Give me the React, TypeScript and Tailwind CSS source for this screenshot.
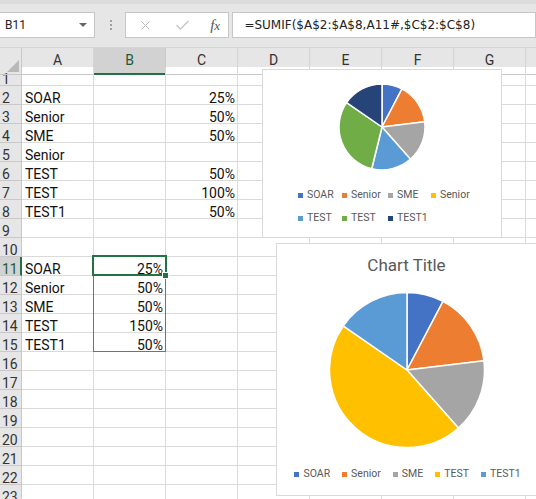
import { Check, X } from 'lucide-react'

const COLS = ['A', 'B', 'C', 'D', 'E', 'F', 'G', 'H']

type Row = { a?: string; b?: string; c?: string }

const rows: Record<number, Row> = {
    2: { a: 'SOAR', c: '25%' },
    3: { a: 'Senior', c: '50%' },
    4: { a: 'SME', c: '50%' },
    5: { a: 'Senior' },
    6: { a: 'TEST', c: '50%' },
    7: { a: 'TEST', c: '100%' },
    8: { a: 'TEST1', c: '50%' },
    11: { a: 'SOAR', b: '25%' },
    12: { a: 'Senior', b: '50%' },
    13: { a: 'SME', b: '50%' },
    14: { a: 'TEST', b: '150%' },
    15: { a: 'TEST1', b: '50%' },
}

const chart1 = [
    { label: 'SOAR', value: 25, fill: '#4472c4', sq: 'bg-[#4472c4]' },
    { label: 'Senior', value: 50, fill: '#ed7d31', sq: 'bg-[#ed7d31]' },
    { label: 'SME', value: 50, fill: '#a5a5a5', sq: 'bg-[#a5a5a5]' },
    { label: 'Senior', value: 0, fill: '#ffc000', sq: 'bg-[#ffc000]' },
    { label: 'TEST', value: 50, fill: '#5b9bd5', sq: 'bg-[#5b9bd5]' },
    { label: 'TEST', value: 100, fill: '#70ad47', sq: 'bg-[#70ad47]' },
    { label: 'TEST1', value: 50, fill: '#264478', sq: 'bg-[#264478]' },
]

const chart2 = [
    { label: 'SOAR', value: 25, fill: '#4472c4', sq: 'bg-[#4472c4]' },
    { label: 'Senior', value: 50, fill: '#ed7d31', sq: 'bg-[#ed7d31]' },
    { label: 'SME', value: 50, fill: '#a5a5a5', sq: 'bg-[#a5a5a5]' },
    { label: 'TEST', value: 150, fill: '#ffc000', sq: 'bg-[#ffc000]' },
    { label: 'TEST1', value: 50, fill: '#5b9bd5', sq: 'bg-[#5b9bd5]' },
]

function Pie({ slices, r, size }: { slices: { value: number; fill: string }[]; r: number; size: number }) {
    const total = slices.reduce((s, x) => s + x.value, 0)
    const c = size / 2
    let acc = 0
    return (
        <svg width={size} height={size} viewBox={`0 0 ${size} ${size}`}>
            {slices.map((s, i) => {
                if (!s.value) return null
                const a0 = (acc / total) * Math.PI * 2
                acc += s.value
                const a1 = (acc / total) * Math.PI * 2
                const x0 = c + r * Math.sin(a0)
                const y0 = c - r * Math.cos(a0)
                const x1 = c + r * Math.sin(a1)
                const y1 = c - r * Math.cos(a1)
                const large = a1 - a0 > Math.PI ? 1 : 0
                return (
                    <path
                        key={i}
                        d={`M${c} ${c} L${x0} ${y0} A${r} ${r} 0 ${large} 1 ${x1} ${y1} Z`}
                        fill={s.fill}
                        stroke="#fff"
                        strokeWidth={1.5}
                        strokeLinejoin="round"
                    />
                )
            })}
        </svg>
    )
}

function LegendItem({ label, sq }: { label: string; sq: string }) {
    return (
        <div className="flex items-center gap-[4px]">
            <span className={`w-[5px] h-[5px] ${sq}`} />
            <span className="text-[10.5px] text-[#595959] leading-none">{label}</span>
        </div>
    )
}

export default function App() {
    const bodyRows = Array.from({ length: 23 }, (_, i) => i + 1)

    return (
        <div className="relative w-[536px] h-[499px] overflow-hidden bg-white font-['Roboto',sans-serif] text-[#111]">
            {/* formula bar */}
            <div className="h-[47px] bg-[#e6e6e6] relative">
                <div className="h-[4px] bg-[#dcdcdc]" />
                <div className="flex items-start pt-[8px]">
                    <div className="w-[100px] h-[26px] bg-white border border-l-0 border-[#c6c6c6] flex items-center justify-between pl-[5px] pr-[7px]">
                        <span className="text-[12px] text-[#222]">B11</span>
                        <span className="w-0 h-0 border-l-[4px] border-r-[4px] border-t-[4px] border-l-transparent border-r-transparent border-t-[#666]" />
                    </div>
                    <div className="ml-[14px] w-[3px] h-[26px] flex flex-col items-center justify-center gap-[2px]">
                        <span className="w-[2px] h-[2px] bg-[#a0a0a0]" />
                        <span className="w-[2px] h-[2px] bg-[#a0a0a0]" />
                        <span className="w-[2px] h-[2px] bg-[#a0a0a0]" />
                    </div>
                    <div className="ml-[13px] w-[110px] h-[26px] bg-white border border-[#c6c6c6] flex items-center">
                        <X size={15} strokeWidth={1.6} className="ml-[12px] text-[#b8b8b8]" />
                        <Check size={17} strokeWidth={1.8} className="ml-[21px] text-[#c4c4c4]" />
                        <span className="ml-[19px] font-['Liberation_Serif',serif] italic text-[15px] text-[#555] leading-none">
                            f<span className="text-[13px]">x</span>
                        </span>
                    </div>
                    <div className="ml-[3px] w-[320px] h-[26px] bg-white border border-[#c6c6c6] flex items-center pl-[11px]">
                        <span className="font-['DejaVu_Sans',sans-serif] text-[12px] text-[#222] whitespace-nowrap">
                            =SUMIF($A$2:$A$8,A11#,$C$2:$C$8)
                        </span>
                    </div>
                </div>
            </div>

            {/* column headers */}
            <div className="grid grid-cols-[22px_repeat(8,72px)] h-[20px] bg-[#e6e6e6] border-t border-t-[#d6d6d6]">
                <div className="relative border-r border-b border-[#c8c8c8]">
                    <svg className="absolute right-[2px] bottom-[2px]" width="12" height="12">
                        <path d="M12 0 L12 12 L0 12 Z" fill="#b9b9b9" />
                    </svg>
                </div>
                {COLS.map((c) => (
                    <div
                        key={c}
                        className={
                            c === 'B'
                                ? 'bg-[#d2d2d2] border-r border-r-[#c8c8c8] border-b-2 border-b-[#217346] text-center text-[14px] leading-[25px] text-[#1d5b38]'
                                : 'border-r border-b border-r-[#d4d4d4] border-b-[#c8c8c8] text-center text-[14px] leading-[25px] text-[#333]'
                        }
                    >
                        {c}
                    </div>
                ))}
            </div>

            {/* sheet body */}
            <div>
                {bodyRows.map((n) => {
                    const r = rows[n] || {}
                    const sel = n === 11
                    return (
                        <div key={n} className="grid grid-cols-[22px_repeat(8,72px)] h-[19px]">
                            <div
                                className={
                                    sel
                                        ? 'h-[19px] bg-[#d2d2d2] border-r-2 border-r-[#217346] border-b border-b-[#c8c8c8] pl-[2px] text-[14px] leading-[25px] text-[#1d5b38]'
                                        : 'h-[19px] bg-[#e6e6e6] border-r border-b border-[#c8c8c8] pl-[2px] text-[14px] leading-[25px] text-[#333]'
                                }
                            >
                                {n}
                            </div>
                            <div className="h-[19px] border-r border-b border-[#dadada] pl-[3px] text-[14px] leading-[25px] whitespace-nowrap">
                                {r.a}
                            </div>
                            <div className="h-[19px] border-r border-b border-[#dadada] pr-[2px] text-right text-[14px] leading-[25px] whitespace-nowrap">
                                {r.b}
                            </div>
                            <div className="h-[19px] border-r border-b border-[#dadada] pr-[2px] text-right text-[14px] leading-[25px] whitespace-nowrap">
                                {r.c}
                            </div>
                            {['D', 'E', 'F', 'G', 'H'].map((c) => (
                                <div key={c} className="h-[19px] border-r border-b border-[#dadada]" />
                            ))}
                        </div>
                    )
                })}
            </div>

            {/* spill range + active cell */}
            <div className="absolute left-[93px] top-[256px] w-[73px] h-[96px] border border-[#4a78c8]" />
            <div className="absolute left-[92px] top-[255px] w-[75px] h-[21px] border-2 border-[#217346]" />
            <div className="absolute left-[162px] top-[272px] w-[7px] h-[7px] bg-[#217346] border border-white" />

            {/* chart 1 */}
            <div className="absolute left-[262px] top-[69px] w-[240px] h-[169px] bg-white border border-[#d9d9d9] flex flex-col">
                <div className="flex justify-center pt-[12px]">
                    <Pie slices={chart1} r={43} size={90} />
                </div>
                <div className="mt-[12px] grid grid-cols-[44px_46px_43px_auto] grid-rows-[23px_23px] items-center pl-[35px]">
                    {chart1.map((s, i) => (
                        <LegendItem key={i} label={s.label} sq={s.sq} />
                    ))}
                </div>
            </div>

            {/* chart 2 */}
            <div className="absolute left-[276px] top-[243px] w-[261px] h-[253px] bg-white border border-[#d9d9d9] flex flex-col items-center">
                <div className="pt-[10px] h-[32px] leading-[22px] text-[17px] text-[#595959]">Chart Title</div>
                <div className="mt-[14px]">
                    <Pie slices={chart2} r={77.5} size={160} />
                </div>
                <div className="mt-[16px] h-[16px] flex items-center gap-[12px] pl-[2px]">
                    {chart2.map((s, i) => (
                        <LegendItem key={i} label={s.label} sq={s.sq} />
                    ))}
                </div>
            </div>
        </div>
    )
}
